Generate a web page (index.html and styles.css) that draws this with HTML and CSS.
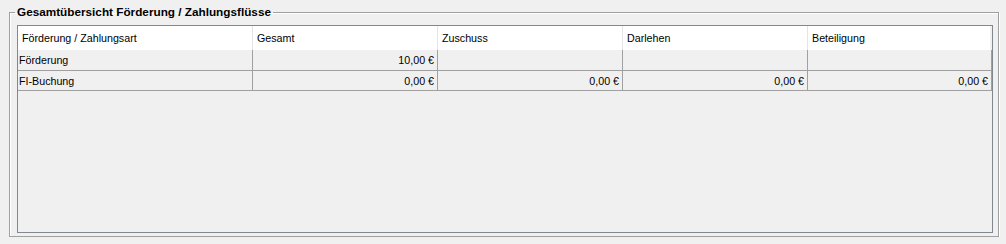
FILE: index.html
```html
<!DOCTYPE html>
<html lang="de">
<head>
<meta charset="utf-8">
<title>Gesamtübersicht Förderung / Zahlungsflüsse</title>
<link rel="stylesheet" href="styles.css">
</head>
<body>
<fieldset class="group">
  <legend class="group-title">Gesamtübersicht Förderung / Zahlungsflüsse</legend>
  <div class="grid">
    <table class="grid-table">
      <colgroup>
        <col class="col-first">
        <col class="col-amount">
        <col class="col-amount">
        <col class="col-amount">
        <col>
      </colgroup>
      <thead>
        <tr>
          <th>Förderung / Zahlungsart</th>
          <th>Gesamt</th>
          <th>Zuschuss</th>
          <th>Darlehen</th>
          <th>Beteiligung</th>
        </tr>
      </thead>
      <tbody>
        <tr>
          <td class="label">Förderung</td>
          <td>10,00 €</td>
          <td></td>
          <td></td>
          <td></td>
        </tr>
        <tr>
          <td class="label">FI-Buchung</td>
          <td>0,00 €</td>
          <td>0,00 €</td>
          <td>0,00 €</td>
          <td>0,00 €</td>
        </tr>
      </tbody>
    </table>
  </div>
</fieldset>
</body>
</html>
```

FILE: styles.css
```css
html, body {
  margin: 0;
  padding: 0;
  background: #f0f0f0;
}

body {
  font-family: "Liberation Sans", Arial, sans-serif;
  font-size: 10.7px;
  color: #000;
  padding: 5px 7px 0 9px;
}

/* etched group box */
.group {
  margin: 0;
  padding: 0 5px 3px 7px;
  width: 990px;
  box-sizing: border-box;
  border: 1px solid #a0a0a0;
  box-shadow: inset 1px 1px 0 #fff, 1px 1px 0 #fff;
}

.group-title {
  margin-left: -2px;
  padding: 0 2px;
  font-weight: bold;
  font-size: 11.75px;
  line-height: 14px;
  color: #000;
}

/* data grid */
.grid {
  margin-top: 6px;
  height: 208px;
  box-sizing: border-box;
  border: 1px solid #828790;
  background: #f0f0f0;
}

.grid-table {
  width: 100%;
  table-layout: fixed;
  border-collapse: separate;
  border-spacing: 0;
}

.col-first { width: 235px; }
.col-amount { width: 185px; }

.grid-table th {
  height: 24px;
  padding: 0 4px;
  background: #fff;
  border-right: 1px solid #e5e5e5;
  font-weight: normal;
  text-align: left;
  white-space: nowrap;
  box-sizing: border-box;
}

.grid-table th:last-child {
  border-right: 2px solid #f0f0f0;
}

.grid-table td {
  height: 20px;
  padding: 0 3px 0 2px;
  border-right: 1px solid #a0a0a0;
  border-bottom: 1px solid #a0a0a0;
  text-align: right;
  white-space: nowrap;
  box-sizing: border-box;
}

.grid-table tbody tr:first-child td {
  height: 21px;
}

.grid-table td.label {
  text-align: left;
  padding-left: 1px;
}
```
